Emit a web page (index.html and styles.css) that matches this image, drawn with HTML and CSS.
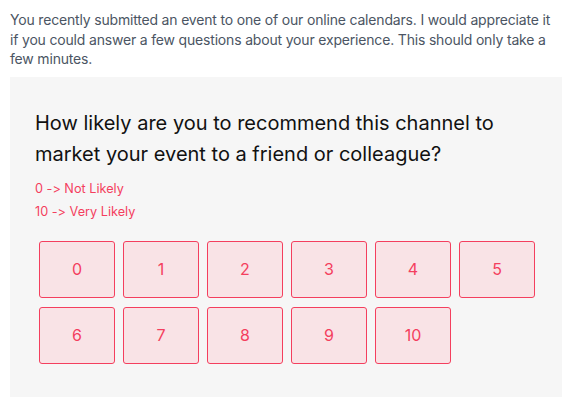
FILE: index.html
```html
<!DOCTYPE html>
<html lang="en">
<head>
    <meta charset="UTF-8">
    <meta name="viewport" content="width=device-width, initial-scale=1.0">
    <title>Survey</title>
    <link rel="stylesheet" href="styles.css">
</head>
<body>

    <p class="intro">You recently submitted an event to one of our online calendars. I would appreciate it if you could answer a few questions about your experience. This should only take a few minutes.</p>

    <div class="question">
        <h2>How likely are you to recommend this channel to market your event to a friend or colleague?</h2>
        <p class="hint">0 -&gt; Not Likely</p>
        <p class="hint">10 -&gt; Very Likely</p>

        <div class="scale">
            <button type="button">0</button>
            <button type="button">1</button>
            <button type="button">2</button>
            <button type="button">3</button>
            <button type="button">4</button>
            <button type="button">5</button>
            <button type="button">6</button>
            <button type="button">7</button>
            <button type="button">8</button>
            <button type="button">9</button>
            <button type="button">10</button>
        </div>
    </div>

</body>
</html>
```

FILE: styles.css
```css
body {
    font-family: Inter, sans-serif;
    font-feature-settings: "calt" 0;
    margin: 0;
    padding: 10px 8px 0 10px;
    background-color: #fff;
}

.intro {
    margin: 0 0 8px;
    font-size: 14px;
    line-height: 19.5px;
    letter-spacing: -0.18px;
    color: #4b5563;
}

.question {
    background-color: #f6f6f6;
    padding: 25px 25px 33px;
    width: 502px;
}

h2 {
    font-weight: 400;
    font-size: 20px;
    line-height: 31px;
    color: #111;
    margin: 6px 0 7px 0;
}

.hint {
    font-size: 12.7px;
    line-height: 23px;
    color: #f43f5e;
    margin: 0;
}

.scale {
    display: flex;
    flex-wrap: wrap;
    gap: 9px 8px;
    margin: 18px 0 0 4px;
}

.scale button {
    font-family: Inter, sans-serif;
    width: 76px;
    height: 57px;
    font-size: 16px;
    color: #f43f5e;
    background-color: #f9e3e6;
    border: 1px solid #f43f5e;
    border-radius: 3px;
    cursor: pointer;
}
```
